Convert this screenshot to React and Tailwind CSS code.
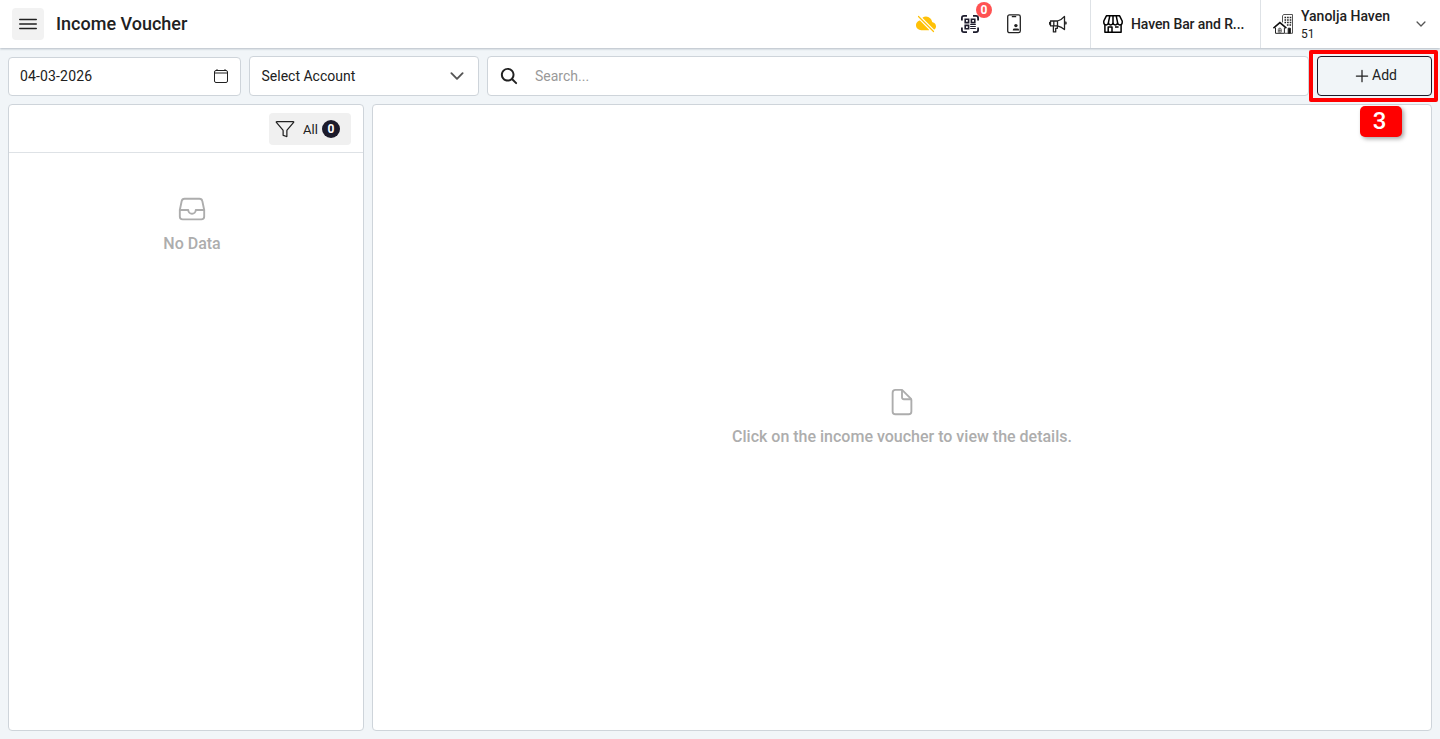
import React from 'react';
import {
  IoMenuOutline, IoCloudOffline, IoCalendarClearOutline, IoChevronDownOutline,
  IoSearch, IoAddOutline, IoFunnelOutline, IoFileTrayOutline, IoDocumentOutline,
} from 'react-icons/io5';

const QrScanIcon = () => (
  <svg width="18" height="18" viewBox="0 0 18 18" fill="none" stroke="#1c1b2b" strokeWidth="1.8">
    <path d="M.9 5.6V3Q.9.9 3 .9h3M12 .9h3q2.1 0 2.1 2.1v2.6M17.1 12.4V15q0 2.1-2.1 2.1h-3M6 17.1H3Q.9 17.1.9 15v-2.6" />
    <path strokeWidth="1.6" d="M4.2 4.2h3.4v3.4H4.2zM10.4 4.2h3.4v3.4h-3.4zM4.2 10.4h3.4v3.4H4.2z" />
    <path strokeWidth="1" d="M9.2 9.5h5.6M9.2 11.5h5.6M9.2 13.5h5.6" />
  </svg>
);

const PhoneUserIcon = () => (
  <svg width="14" height="20" viewBox="0 0 14 20" fill="none" stroke="#222" strokeWidth="1.3">
    <rect x=".7" y=".9" width="12.6" height="17.8" rx="1.8" />
    <path d="M4.8 2.6h4.4" />
    <circle cx="8.9" cy="11.6" r="1.7" fill="#222" stroke="none" />
    <path d="M5.8 16.6v-.7q0-1.4 1.7-1.4h2.9q1.7 0 1.7 1.4v.7z" fill="#222" stroke="none" />
  </svg>
);

const MegaphoneIcon = () => (
  <svg width="18" height="18" viewBox="0 0 18 18" fill="none" stroke="#222" strokeWidth="1.3" strokeLinejoin="round">
    <path d="M1.5 6h7v4.8h-7zM4.8 6v4.8M8.5 6q4.2-1.2 7-4.6v13.2q-2.8-2.8-7-3.8M.4 7v2.8M16.5 6.6q1.2 1.4 0 2.8" />
    <path d="M4.4 10.8v6.1h2.3v-3.6h1.7v-2.5" />
  </svg>
);

const StoreIcon = () => (
  <svg width="20" height="18" viewBox="0 0 20 18" fill="none" stroke="#000" strokeWidth="1.5" strokeLinejoin="round">
    <path d="M3.4.8h13.2L19.2 6v1.6a2.3 2.3 0 0 1-4.6 0 2.3 2.3 0 0 1-4.6 0 2.3 2.3 0 0 1-4.6 0 2.3 2.3 0 0 1-4.6 0V6zM6.8.9 5.4 7.6M10 .9v6.7M13.2.9l1.4 6.7" />
    <path d="M1.9 9.8v7.4h16.2V9.8M5.2 17v-5h3.8v5M12 12h3.6" />
  </svg>
);

const PropertyIcon = () => (
  <svg width="21" height="20" viewBox="0 0 21 20" fill="none" stroke="#222" strokeWidth="1">
    <path d="M.4 14.2 6.9 8.6l6.5 5.6" strokeWidth="1.6" stroke="#111" />
    <path d="M2.5 13.6v5.7h8.9v-5.7" />
    <path d="M5.3 18.2v-2.8q0-1.3 1.5-1.3t1.5 1.3v2.8zM5.3 16.3h3M6.8 14.2v4" strokeWidth=".6" />
    <path d="M9.5 8.4V2l1-1.5h9v18.8h-8" strokeWidth="1" stroke="#555" />
    <path d="M11.5 3.5h6.8M11.5 6h6.8M11.5 8.5h6.8M13.9 11h4.4" strokeWidth="1.4" strokeDasharray="1.6 1" />
    <path d="M15.2 14.2h2.2v5.1h-2.2z" fill="#111" />
  </svg>
);

const EmptyState = ({ icon: Icon, children }) => (
  <div className="flex flex-col items-center text-[#adadad]">
    <Icon size={30} />
    <p className="mt-[8px] -mb-px text-[16px] leading-6 font-medium">{children}</p>
  </div>
);

function Header() {
  return (
    <header className="relative flex h-12 shrink-0 items-center bg-white pl-3 shadow-[0_1px_2px_rgba(90,105,120,0.4)]">
      <button type="button" className="flex size-8 items-center justify-center rounded bg-[#f2f2f2]">
        <IoMenuOutline size={24} />
      </button>
      <h1 className="ml-3 flex-1 pb-[2px] text-[18px] font-medium">Income Voucher</h1>
      <div className="mr-[22px] flex items-center">
        <span className="flex w-11 justify-center text-[#ffc107]"><IoCloudOffline size={20} /></span>
        <span className="relative flex w-11 justify-center">
          <QrScanIcon />
          <span className="absolute -top-[13px] right-0 flex size-4 items-center justify-center rounded-full bg-[#ff5252] text-[12px] font-bold text-white">0</span>
        </span>
        <span className="flex w-11 justify-center"><PhoneUserIcon /></span>
        <span className="flex w-11 justify-center"><MegaphoneIcon /></span>
      </div>
      <div className="-ml-3 flex h-full w-[170px] items-center border-l border-[#dee2e6] pl-3">
        <StoreIcon />
        <span className="ml-2 text-[14px] font-medium tracking-[-0.1px]">Haven Bar and R...</span>
      </div>
      <div className="flex h-full w-[180px] items-center border-l border-[#dee2e6] pl-3">
        <PropertyIcon />
        <div className="ml-[7px] flex-1 pt-[3px]">
          <div className="text-[14px] leading-[17px] font-medium">Yanolja Haven</div>
          <div className="text-[12px] leading-[18px]">51</div>
        </div>
        <IoChevronDownOutline size={14} className="mr-3 text-[#555]" />
      </div>
    </header>
  );
}

function Toolbar() {
  return (
    <div className="flex h-10 shrink-0 items-end gap-2 text-[14px]">
      <div className="flex h-[39px] w-[233px] items-center justify-between rounded border border-[#ced4da] bg-white px-[11px]">
        <span className="tracking-[0.15px]">04-03-2026</span>
        <IoCalendarClearOutline size={16} className="mb-[2px]" />
      </div>
      <div className="flex h-10 w-[230px] items-center justify-between rounded border border-[#ced4da] bg-white pr-[11px] pl-[11.5px]">
        <span>Select Account</span>
        <IoChevronDownOutline size={20} className="text-[#555]" />
      </div>
      <div className="flex h-10 flex-1 items-center rounded border border-[#ced4da] bg-white pl-[11px]">
        <IoSearch size={20} />
        <span className="ml-4 text-[#999]">Search...</span>
      </div>
      <div className="relative">
        <button type="button" className="flex h-10 w-[115px] items-center justify-center rounded border border-[#1c1b2b] bg-[#f1f5f8]">
          <IoAddOutline size={20} />
          <span className="pb-[2px]">Add</span>
        </button>
        <div className="absolute -top-[6px] -left-[8px] h-[52px] w-[129px] rounded-[2px] border-[4px] border-[#ff0000]" />
        <div className="absolute top-[50px] left-[43px] flex h-[31px] w-[42px] items-center justify-center rounded-[5px] bg-[#ff0000] pr-[3px] pb-px text-[24px] leading-none font-medium text-white shadow-[2px_2px_4px_rgba(0,0,0,0.35)]">3</div>
      </div>
    </div>
  );
}

export default function App() {
  return (
    <div className="flex h-[739px] flex-col overflow-hidden bg-[#f1f5f8] font-['Roboto',sans-serif] text-[#212121]">
      <Header />
      <main className="flex min-h-0 flex-1 flex-col gap-2 p-2">
        <Toolbar />
        <div className="flex min-h-0 flex-1 gap-2">
          <section className="w-[356px] rounded border border-[#ced4da] bg-white">
            <div className="flex h-12 items-center justify-end border-b border-[#dee2e6] pr-3">
              <button type="button" className="flex h-8 w-[82px] items-center rounded bg-[#f0f0f0] pl-[6px] text-[13px]">
                <IoFunnelOutline size={20} />
                <span className="ml-2 w-[15px] pt-[2px]">All</span>
                <span className="ml-1 flex size-[18px] items-center justify-center rounded-full bg-[#1c1b2b] text-[12px] font-bold text-white">0</span>
              </button>
            </div>
            <div className="pt-[41px] pl-[12px]">
              <EmptyState icon={IoFileTrayOutline}>No Data</EmptyState>
            </div>
          </section>
          <section className="flex flex-1 items-center justify-center rounded border border-[#ced4da] bg-white">
            <EmptyState icon={IoDocumentOutline}>Click on the income voucher to view the details.</EmptyState>
          </section>
        </div>
      </main>
    </div>
  );
}
